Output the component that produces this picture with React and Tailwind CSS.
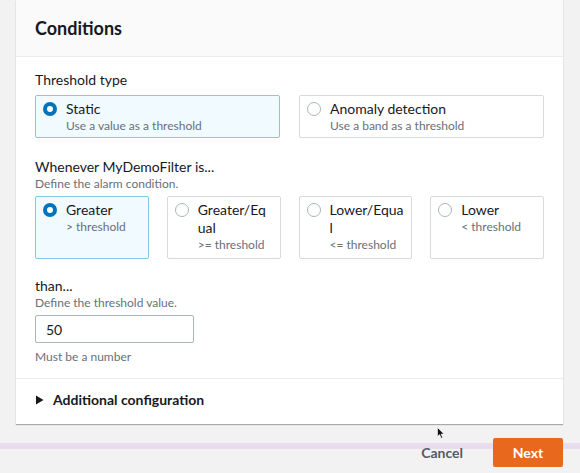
import React from 'react';

const font = { fontFamily: 'Lato, "Open Sans", sans-serif' };

const Radio = ({ checked }) =>
  checked ? (
    <span className="mt-[2px] h-[14px] w-[14px] shrink-0 rounded-full border-[4px] border-[#0073bb] bg-white" />
  ) : (
    <span className="mt-[2px] h-[14px] w-[14px] shrink-0 rounded-full border border-[#aab7b8] bg-white" />
  );

const Tile = ({ checked, label, desc, className = '' }) => (
  <div
    className={
      'flex gap-[9px] rounded-[2px] border pl-[7px] pr-[9px] pt-[4px] ' +
      (checked ? 'border-[#7fcde3] bg-[#f1faff] ' : 'border-[#d5dbdb] bg-white ') +
      className
    }
  >
    <Radio checked={checked} />
    <div className="min-w-0">
      <div className="text-[14px] leading-[18px] text-[#16191f]">{label}</div>
      <div className="text-[12px] leading-[16px] text-[#687078]">{desc}</div>
    </div>
  </div>
);

const Cursor = () => (
  <svg className="absolute left-[437px] top-[427px]" width="8" height="12" viewBox="0 0 8 12">
    <path d="M0.5 0.5 L0.5 9.5 L2.6 7.6 L4.2 11.3 L5.6 10.7 L4.1 7.1 L7 7.1 Z" fill="#111" stroke="#fff" strokeWidth="0.6" />
  </svg>
);

export default function App() {
  return (
    <div style={font} className="relative flex h-[473px] w-[580px] flex-col overflow-hidden bg-[#f2f2f2]">
      <div className="ml-[16px] w-[547px] bg-white shadow-[0_1px_1px_rgba(0,0,0,0.3)]">
        <div className="flex h-[57px] items-center border-b border-[#eaeded] bg-[#fafafa] px-[19px]">
          <h2 className="text-[18px] font-bold text-[#16191f]">Conditions</h2>
        </div>

        <div className="px-[19px] pt-[14px]">
          <div className="text-[14px] leading-[18px] text-[#16191f]">Threshold type</div>
          <div className="mt-[6px] grid grid-cols-2 gap-[19px]">
            <Tile checked label="Static" desc="Use a value as a threshold" className="h-[43px]" />
            <Tile label="Anomaly detection" desc="Use a band as a threshold" className="h-[43px]" />
          </div>

          <div className="mt-[20px] text-[14px] leading-[18px] text-[#16191f]">Whenever MyDemoFilter is...</div>
          <div className="text-[12px] leading-[16px] text-[#687078]">Define the alarm condition.</div>
          <div className="mt-[4px] grid grid-cols-4 gap-[18px]">
            <Tile checked label="Greater" desc="> threshold" className="h-[63px]" />
            <Tile label={<>Greater/Eq<br />ual</>} desc=">= threshold" className="h-[63px]" />
            <Tile label={<>Lower/Equa<br />l</>} desc="<= threshold" className="h-[63px]" />
            <Tile label="Lower" desc="< threshold" className="h-[63px]" />
          </div>

          <div className="mt-[18px] text-[14px] leading-[18px] text-[#16191f]">than...</div>
          <div className="text-[12px] leading-[16px] text-[#687078]">Define the threshold value.</div>
          <div className="mt-[4px] flex h-[28px] w-[159px] items-center rounded-[2px] border border-[#aab7b8] px-[10px] text-[14px] text-[#16191f]">
            50
          </div>
          <div className="mt-[6px] pb-[13px] text-[12px] leading-[16px] text-[#687078]">Must be a number</div>
        </div>

        <div className="flex h-[46px] items-center gap-[9px] border-t border-[#eaeded] px-[19px] pb-[4px]">
          <svg width="9" height="10" viewBox="0 0 9 10">
            <path d="M1 0.5 L8.5 5 L1 9.5 Z" fill="#16191f" />
          </svg>
          <span className="text-[14px] font-bold text-[#16191f]">Additional configuration</span>
        </div>
      </div>

      <div className="relative mt-[14px] flex h-[29px] items-center justify-end gap-[30px] pr-[17px]">
        <div className="absolute left-0 right-0 top-[5px] h-[6px] bg-[#e8ddef]" />
        <span className="relative text-[14px] font-bold text-[#545b64]">Cancel</span>
        <button className="relative h-[29px] w-[70px] rounded-[2px] bg-[#e8691d] text-[14px] font-bold text-white">
          Next
        </button>
      </div>
      <Cursor />
    </div>
  );
}
